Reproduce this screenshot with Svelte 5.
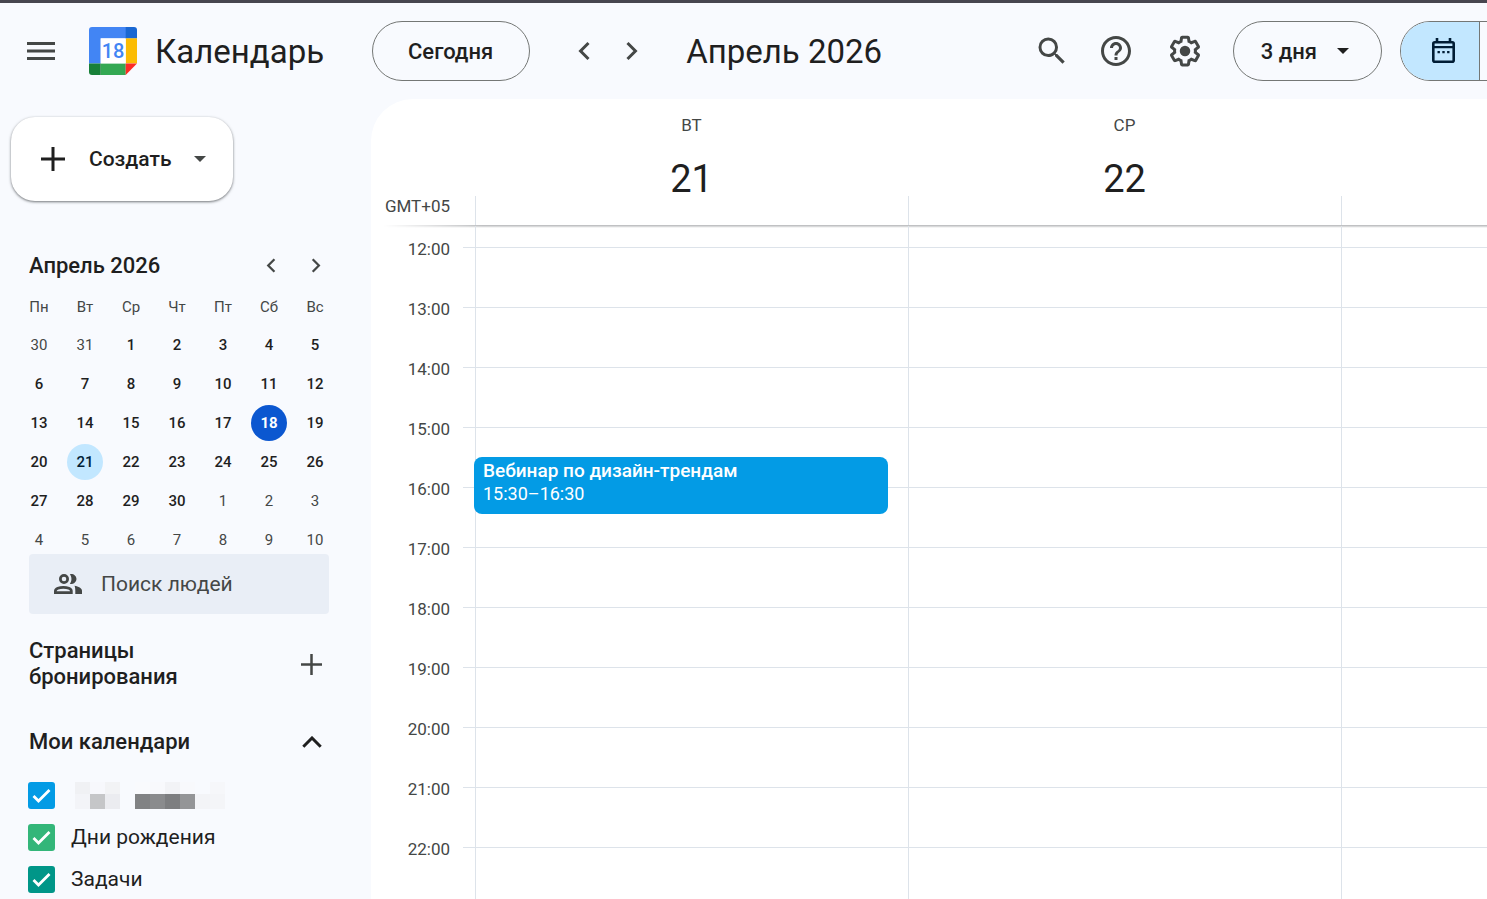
<script lang="ts">
  type Day = { n: number; outside?: boolean; today?: boolean; selected?: boolean };

  const weekdays = ['Пн', 'Вт', 'Ср', 'Чт', 'Пт', 'Сб', 'Вс'];
  const hours = Array.from({ length: 11 }, (_, i) => `${i + 12}:00`);

  const HOUR_HEIGHT = 60;
  const FIRST_LINE = 21;

  const days = [
    {
      name: 'ВТ',
      date: '21',
      events: [{ title: 'Вебинар по дизайн-трендам', time: '15:30–16:30', start: 15.5, length: 1 }]
    },
    { name: 'СР', date: '22', events: [] },
    { name: '', date: '', events: [] }
  ];

  // Two days of March, thirty of April, ten of May
  const monthDays: Day[] = Array.from({ length: 42 }, (_, i) => {
    if (i < 2) return { n: 30 + i, outside: true };
    if (i > 31) return { n: i - 31, outside: true };
    return { n: i - 1, today: i - 1 === 18, selected: i - 1 === 21 };
  });
  const weeks = Array.from({ length: 6 }, (_, w) => monthDays.slice(w * 7, w * 7 + 7));

  let calendars = $state([
    { id: 'own', label: '', color: '#039be5', checked: true },
    { id: 'birthdays', label: 'Дни рождения', color: '#33b679', checked: true },
    { id: 'tasks', label: 'Задачи', color: '#009688', checked: true }
  ]);

  // x, y, height, colour of each tile over the hidden account name
  const tiles: [number, number, number, string][] = [
    [0, 0, 12, '#f0f1f4'],
    [15, 0, 12, '#f7f8fc'],
    [30, 0, 12, '#f2f3f5'],
    [0, 12, 15, '#f3f4f8'],
    [15, 12, 15, '#c5c6c8'],
    [30, 12, 15, '#ebecf0'],
    [60, 0, 12, '#f9fafd'],
    [75, 0, 12, '#f8f9fc'],
    [90, 0, 12, '#f2f3f6'],
    [105, 0, 12, '#f8f9fc'],
    [135, 0, 12, '#f6f7fa'],
    [60, 12, 15, '#818284'],
    [75, 12, 15, '#8a8b8d'],
    [90, 12, 15, '#7d7e80'],
    [105, 12, 15, '#949597'],
    [120, 12, 15, '#f3f4f7'],
    [135, 12, 15, '#f4f5f8']
  ];
</script>

{#snippet chevron(d: string, size: number, width: number)}
  <svg width={size} height={size} viewBox="0 0 24 24" aria-hidden="true">
    <path {d} fill="none" stroke="currentColor" stroke-width={width} />
  </svg>
{/snippet}

<div class="app">
  <header class="topbar">
    <div class="brand">
      <button class="icon-button menu" aria-label="Главное меню">
        <svg width="36" height="36" viewBox="0 0 36 36" aria-hidden="true">
          <path d="M4 9h28v3H4zM4 16.500h28v3H4zM4 24h28v3H4z" fill="currentColor" />
        </svg>
      </button>
      <svg class="logo" width="48" height="48" viewBox="0 0 48 48" role="img" aria-label="Календарь">
        <path d="M3 0h34v11.500H11.700V36.500H0V3a3 3 0 0 1 3-3z" fill="#4285f4" />
        <path d="M36.700 0H45a3 3 0 0 1 3 3v8.500H36.700z" fill="#1967d2" />
        <path d="M36.700 11.300H48V36.400H36.700z" fill="#fbbc04" />
        <path d="M11.700 36.400h25V48h-25z" fill="#34a853" />
        <path d="M0 36.400h11.700V48H3a3 3 0 0 1-3-3z" fill="#188038" />
        <path d="M36.700 36.400H48L36.700 48z" fill="#fc2c25" />
        <path d="M11.700 11.300h25v25.100h-25z" fill="#fff" />
        <text x="24" y="31" text-anchor="middle" class="logo-date">18</text>
      </svg>
      <span class="brand-name">Календарь</span>
    </div>

    <button class="pill today">Сегодня</button>
    <div class="pager">
      <button class="icon-button" aria-label="Назад">
        {@render chevron('M15 6.700L9.700 12l5.300 5.300', 36, 2)}
      </button>
      <button class="icon-button" aria-label="Вперед">
        {@render chevron('M9 6.700l5.300 5.300L9 17.300', 36, 2)}
      </button>
    </div>
    <h1>Апрель 2026</h1>

    <div class="tools">
      <button class="icon-button" aria-label="Поиск">
        <svg width="36" height="36" viewBox="0 0 24 24" fill="currentColor" aria-hidden="true">
          <path
            d="M15.500 14h-.79l-.28-.27A6.470 6.470 0 0 0 16 9.500 6.500 6.500 0 1 0 9.500 16c1.610 0 3.090-.59 4.230-1.570l.27.28v.79l5 4.990L20.490 19l-4.990-5zm-6 0C7.010 14 5 11.990 5 9.500S7.010 5 9.500 5 14 7.010 14 9.500 11.990 14 9.500 14z"
          />
        </svg>
      </button>
      <div class="support">
        <button class="icon-button" aria-label="Справка">
          <svg width="36" height="36" viewBox="0 0 24 24" fill="currentColor" aria-hidden="true">
            <path
              d="M11 18h2v-2h-2v2zm1-16C6.480 2 2 6.480 2 12s4.480 10 10 10 10-4.480 10-10S17.520 2 12 2zm0 18c-4.410 0-8-3.590-8-8s3.590-8 8-8 8 3.590 8 8-3.590 8-8 8zm0-14c-2.210 0-4 1.790-4 4h2c0-1.100.9-2 2-2s2 .9 2 2c0 2-3 1.750-3 5h2c0-2.250 3-2.500 3-5 0-2.210-1.790-4-4-4z"
            />
          </svg>
        </button>
        <button class="icon-button" aria-label="Настройки">
          <svg width="36" height="36" viewBox="0 0 24 24" fill="currentColor" aria-hidden="true">
            <path
              d="M13.850 22.250h-3.700c-.74 0-1.360-.54-1.450-1.270l-.27-1.890c-.27-.14-.53-.29-.79-.46l-1.800.72c-.7.26-1.470-.03-1.810-.65L2.200 15.530c-.35-.66-.2-1.440.36-1.880l1.530-1.190c-.01-.15-.02-.3-.02-.46 0-.15.01-.31.02-.46l-1.520-1.190c-.59-.45-.74-1.260-.37-1.880l1.850-3.190c.34-.62 1.110-.9 1.790-.63l1.810.73c.26-.17.52-.32.78-.46l.27-1.910c.09-.7.71-1.250 1.440-1.250h3.700c.74 0 1.360.54 1.450 1.270l.27 1.890c.27.14.53.29.79.46l1.800-.72c.71-.26 1.480.03 1.820.65l1.840 3.180c.36.66.2 1.440-.36 1.880l-1.520 1.190c.01.15.02.3.02.46s-.01.31-.02.46l1.520 1.190c.56.45.72 1.230.37 1.860l-1.860 3.220c-.34.62-1.110.9-1.800.63l-1.800-.72c-.26.17-.52.32-.78.46l-.27 1.910c-.1.68-.72 1.220-1.460 1.220zm-3.230-2h2.760l.37-2.550.53-.22c.44-.18.88-.44 1.340-.78l.45-.34 2.380.96 1.380-2.400-2.030-1.580.07-.56c.03-.26.06-.51.06-.78s-.03-.53-.06-.78l-.07-.56 2.030-1.580-1.390-2.400-2.390.96-.45-.35c-.42-.32-.87-.58-1.330-.77l-.52-.22-.37-2.550h-2.760l-.37 2.550-.53.21c-.44.19-.88.44-1.340.79l-.45.33-2.380-.95-1.390 2.390 2.030 1.580-.07.56a7 7 0 0 0-.06.79c0 .26.02.53.06.78l.07.56-2.030 1.580 1.380 2.400 2.390-.96.45.35c.43.33.86.58 1.330.77l.53.22.38 2.550z"
            />
            <circle cx="12" cy="12" r="3.500" />
          </svg>
        </button>
      </div>
    </div>

    <button class="pill view">
      3 дня
      <svg width="12" height="6" viewBox="0 0 12 6" aria-hidden="true">
        <path d="M0 0h12L6 6z" fill="currentColor" />
      </svg>
    </button>

    <div class="switcher">
      <button class="active" aria-label="Календарь">
        <svg width="36" height="36" viewBox="0 0 36 36" aria-hidden="true">
          <path d="M12 5v4M25 5v4" stroke="currentColor" stroke-width="2.600" />
          <rect x="8.300" y="9.300" width="20.400" height="19.400" rx="1.500" fill="none" stroke="currentColor" stroke-width="2.600" />
          <path d="M8 14.200h21" stroke="currentColor" stroke-width="2.200" />
          <path d="M12.500 18h2.400v2.200h-2.400zM17.300 18h2.400v2.200h-2.400zM22.100 18h2.400v2.200h-2.400z" fill="currentColor" />
        </svg>
      </button>
      <button aria-label="Задачи"></button>
    </div>
  </header>

  <div class="content">
    <aside>
      <button class="create">
        <svg width="24" height="24" viewBox="0 0 24 24" aria-hidden="true">
          <path d="M12 0v24M0 12h24" stroke="currentColor" stroke-width="3" />
        </svg>
        <span>Создать</span>
        <svg width="12" height="6" viewBox="0 0 12 6" aria-hidden="true">
          <path d="M0 0h12L6 6z" fill="#444746" />
        </svg>
      </button>

      <section class="mini">
        <div class="mini-head">
          <h2>Апрель 2026</h2>
          <button class="icon-button" aria-label="Предыдущий месяц">
            {@render chevron('M15.500 6.500L10 12l5.500 5.500', 27, 2)}
          </button>
          <button class="icon-button" aria-label="Следующий месяц">
            {@render chevron('M9.500 6.500L15 12l-5.500 5.500', 27, 2)}
          </button>
        </div>
        <table>
          <thead>
            <tr>
              {#each weekdays as name}
                <th scope="col">{name}</th>
              {/each}
            </tr>
          </thead>
          <tbody>
            {#each weeks as week}
              <tr>
                {#each week as day}
                  <td>
                    <button class:outside={day.outside} class:is-today={day.today} class:selected={day.selected}>
                      {day.n}
                    </button>
                  </td>
                {/each}
              </tr>
            {/each}
          </tbody>
        </table>
      </section>

      <label class="people">
        <svg width="28" height="20" viewBox="0 0 28 20" aria-hidden="true">
          <g fill="none" stroke="currentColor" stroke-width="2.700">
            <circle cx="10" cy="5" r="3.650" />
            <path d="M1.350 18.650V17c0-2.200 4-3.700 8-3.700s8 1.500 8 3.700v1.650z" />
          </g>
          <path
            d="M15.800.3a5 5 0 1 1 0 9.400c2.200-2.600 2.200-6.800 0-9.400zM20.500 11.700c4 .6 7.500 2.300 7.500 5.100V20h-6.700v-3c0-2.200-.2-3.900-.8-5.300z"
            fill="currentColor"
          />
        </svg>
        <input type="text" placeholder="Поиск людей" aria-label="Поиск людей" />
      </label>

      <div class="section-head booking">
        <h2>Страницы бронирования</h2>
        <button class="icon-button" aria-label="Создать страницу бронирования">
          <svg width="21" height="21" viewBox="0 0 21 21" aria-hidden="true">
            <path d="M10.500 0v21M0 10.500h21" stroke="currentColor" stroke-width="2.500" />
          </svg>
        </button>
      </div>

      <div class="section-head mine">
        <h2>Мои календари</h2>
        <button class="icon-button dark" aria-label="Свернуть">
          <svg width="20" height="12" viewBox="0 0 20 12" aria-hidden="true">
            <path d="M1.300 10.700L10 2l8.700 8.700" fill="none" stroke="currentColor" stroke-width="3" />
          </svg>
        </button>
      </div>

      <ul class="calendars">
        {#each calendars as calendar (calendar.id)}
          <li>
            <label>
              <span class="check" style="--color: {calendar.color}">
                <input type="checkbox" bind:checked={calendar.checked} aria-label={calendar.label || 'Мой календарь'} />
                <svg width="27" height="27" viewBox="0 0 27 27" aria-hidden="true">
                  <path d="M5.500 14l5 5L21.500 8" fill="none" stroke="#fff" stroke-width="2.800" />
                </svg>
              </span>
              {#if calendar.label}
                <span>{calendar.label}</span>
              {:else}
                <svg class="hidden-name" width="150" height="27" shape-rendering="crispEdges" aria-hidden="true">
                  {#each tiles as [x, y, height, fill]}
                    <rect {x} {y} width="15" {height} {fill} />
                  {/each}
                </svg>
              {/if}
            </label>
          </li>
        {/each}
      </ul>
    </aside>

    <main>
      <div class="row head">
        <div class="zone">GMT+05</div>
        {#each days as day}
          <div class="day-head">
            <span class="day-name">{day.name}</span>
            <span class="day-date">{day.date}</span>
            <div class="all-day"></div>
          </div>
        {/each}
      </div>
      <div class="row body">
        <ol class="axis">
          {#each hours as hour}
            <li><span>{hour}</span></li>
          {/each}
        </ol>
        {#each days as day}
          <div class="day">
            {#each hours as _}
              <div class="slot"></div>
            {/each}
            {#each day.events as event}
              <button
                class="event"
                style="top: {FIRST_LINE + (event.start - 12) * HOUR_HEIGHT}px; height: {event.length * HOUR_HEIGHT - 3}px"
              >
                <strong>{event.title}</strong>
                <span>{event.time}</span>
              </button>
            {/each}
          </div>
        {/each}
      </div>
    </main>
  </div>
</div>

<style>
  :global(body) {
    margin: 0;
    background: #f8fafe;
  }

  .app {
    display: flex;
    flex-direction: column;
    box-sizing: border-box;
    height: 100vh;
    overflow: hidden;
    border-top: 3px solid #47464f;
    background: #f8fafe;
    color: #1f1f1f;
    font-family: Roboto, 'Noto Sans', sans-serif;
    font-size: 21px;
  }

  button {
    padding: 0;
    border: 0;
    background: none;
    color: inherit;
    font: inherit;
    cursor: pointer;
  }

  h1,
  h2 {
    margin: 0;
    font-size: 22px;
    font-weight: 500;
  }

  ul,
  ol {
    margin: 0;
    padding: 0;
    list-style: none;
  }

  svg {
    display: block;
    flex: none;
  }

  .icon-button {
    display: flex;
    flex: none;
    align-items: center;
    justify-content: center;
    color: #444746;
  }

  .dark {
    color: #1f1f1f;
  }

  /* Top bar */
  .topbar {
    display: flex;
    flex: none;
    align-items: center;
    height: 96px;
  }

  .brand {
    display: flex;
    flex: none;
    align-items: center;
    box-sizing: border-box;
    width: 372px;
    padding-left: 23px;
  }

  .logo {
    margin-left: 30px;
  }

  .logo-date {
    fill: #4285f4;
    font-size: 20px;
    font-weight: 500;
  }

  .brand-name {
    margin-left: 18px;
    font-size: 33px;
  }

  .pill {
    display: flex;
    flex: none;
    align-items: center;
    box-sizing: border-box;
    height: 60px;
    border: 1px solid #747775;
    border-radius: 30px;
    font-size: 22px;
    font-weight: 500;
  }

  .today {
    padding: 0 36px 0 35px;
  }

  .pager {
    display: flex;
    gap: 12px;
    margin-left: 36px;
  }

  h1 {
    flex: 1;
    margin-left: 36px;
    font-size: 33px;
    font-weight: 400;
    white-space: nowrap;
  }

  .tools {
    display: flex;
    gap: 28px;
    margin-right: 30px;
  }

  .support {
    display: flex;
    gap: 33px;
  }

  .view {
    gap: 20px;
    margin-right: 18px;
    padding: 0 32px 0 27px;
  }

  /* The second half runs past the window edge */
  .switcher {
    display: flex;
    flex: none;
    box-sizing: border-box;
    height: 60px;
    margin-right: -73px;
    overflow: hidden;
    border: 1px solid #747775;
    border-radius: 30px;
    color: #001d35;
  }

  .switcher button {
    display: flex;
    align-items: center;
    justify-content: center;
    width: 79px;
    padding-left: 5px;
    box-sizing: border-box;
  }

  .switcher .active {
    border-right: 1px solid #747775;
    background: #c2e7ff;
  }

  .content {
    display: flex;
    flex: 1;
    min-height: 0;
  }

  /* Sidebar */
  aside {
    flex: none;
    box-sizing: border-box;
    width: 371px;
    padding: 18px 42px 0 29px;
  }

  .create {
    display: flex;
    align-items: center;
    height: 84px;
    margin-left: -18px;
    padding: 0 27px 0 30px;
    border-radius: 24px;
    background: #fff;
    box-shadow:
      0 1px 3px rgba(60, 64, 67, 0.5),
      0 1px 2px rgba(60, 64, 67, 0.3);
    font-weight: 500;
  }

  .create span {
    margin: 0 22px 0 24px;
  }

  .mini {
    margin-top: 45px;
  }

  .mini-head {
    display: flex;
    align-items: center;
    gap: 18px;
    height: 39px;
  }

  .mini-head h2 {
    flex: 1;
  }

  table {
    width: 322px;
    margin: 3px 0 -5px -13px;
    border-collapse: collapse;
    table-layout: fixed;
    font-size: 15px;
  }

  th {
    height: 37px;
    padding: 0;
    color: #444746;
    font-weight: 400;
  }

  td {
    height: 39px;
    padding: 0;
  }

  td button {
    display: block;
    width: 36px;
    height: 36px;
    margin: 0 auto;
    border-radius: 50%;
    font-weight: 500;
  }

  .outside {
    color: #444746;
    font-weight: 400;
  }

  .is-today {
    background: #0b57d0;
    color: #fff;
    font-weight: 700;
  }

  .selected {
    background: #c2e7ff;
    color: #001d35;
  }

  .people {
    position: relative;
    display: flex;
    align-items: center;
    gap: 19px;
    height: 60px;
    padding-left: 25px;
    border-radius: 4px;
    background: #e9eef6;
    color: #444746;
  }

  .people input {
    flex: 1;
    min-width: 0;
    padding: 0;
    border: 0;
    outline: 0;
    background: none;
    color: inherit;
    font: inherit;
  }

  .people input::placeholder {
    color: #444746;
    opacity: 1;
  }

  .section-head {
    display: flex;
    align-items: center;
    justify-content: space-between;
    padding-right: 7px;
    line-height: 26px;
  }

  .booking {
    margin-top: 24px;
  }

  .booking h2 {
    width: 200px;
  }

  .mine {
    margin-top: 39px;
  }

  .calendars {
    margin: 19px 0 0 -1px;
  }

  .calendars label {
    display: flex;
    align-items: center;
    gap: 16px;
    height: 42px;
    line-height: 28px;
  }

  .check {
    display: grid;
    flex: none;
  }

  .check input,
  .check svg {
    grid-area: 1 / 1;
  }

  .check input {
    width: 27px;
    height: 27px;
    margin: 0;
    box-sizing: border-box;
    border: 3px solid var(--color);
    border-radius: 3px;
    appearance: none;
  }

  .check input:checked {
    background: var(--color);
  }

  .check input:not(:checked) + svg {
    visibility: hidden;
  }

  .check svg {
    pointer-events: none;
  }

  .hidden-name {
    margin-left: 4px;
  }

  /* Day grid */
  main {
    display: flex;
    flex: 1;
    flex-direction: column;
    min-width: 0;
    overflow: hidden;
    border-top-left-radius: 42px;
    background: #fff;
  }

  .row {
    display: grid;
    flex: none;
    grid-template-columns: 104px repeat(3, minmax(433px, 1fr));
  }

  .head {
    position: relative;
    height: 127px;
  }

  .head::after {
    content: '';
    position: absolute;
    right: 0;
    bottom: -2px;
    left: 12px;
    height: 3px;
    background: linear-gradient(#c0c1c3 0 1px, #d8d9da 1px 2px, #f4f4f4 2px);
    mask-image: linear-gradient(to right, transparent, #000 100px);
  }

  .zone {
    align-self: end;
    padding: 0 25px 10px 0;
    color: #444746;
    font-size: 17px;
    line-height: 20px;
    text-align: right;
  }

  .day-head {
    display: flex;
    flex-direction: column;
    align-items: center;
  }

  .day-name {
    margin-top: 16px;
    color: #444746;
    font-size: 17px;
    line-height: 20px;
  }

  .day-date {
    margin-top: 27px;
    font-size: 38px;
    line-height: 34px;
  }

  .all-day {
    align-self: stretch;
    height: 30px;
    margin-top: auto;
    border-left: 1px solid #dde3ea;
  }

  .body {
    flex: 1;
    min-height: 0;
    overflow: hidden;
  }

  .axis {
    margin-top: -9px;
    color: #444746;
    font-size: 17px;
  }

  .axis li {
    display: flex;
    align-items: center;
    justify-content: flex-end;
    gap: 13px;
    height: 60px;
  }

  .axis span {
    padding-top: 4px;
  }

  .axis li::after {
    content: '';
    width: 12px;
    height: 1px;
    background: #dde3ea;
  }

  .day {
    position: relative;
    padding-top: 21px;
    border-left: 1px solid #dde3ea;
  }

  .slot {
    box-sizing: border-box;
    height: 60px;
    border-top: 1px solid #dde3ea;
  }

  .event {
    position: absolute;
    right: 20px;
    left: -2px;
    display: flex;
    flex-direction: column;
    box-sizing: border-box;
    padding: 2px 9px;
    border-radius: 8px;
    background: #039be5;
    color: #fff;
    font-size: 18px;
    line-height: 23px;
    text-align: left;
  }

  .event strong {
    font-size: 19px;
    font-weight: 500;
  }
</style>
